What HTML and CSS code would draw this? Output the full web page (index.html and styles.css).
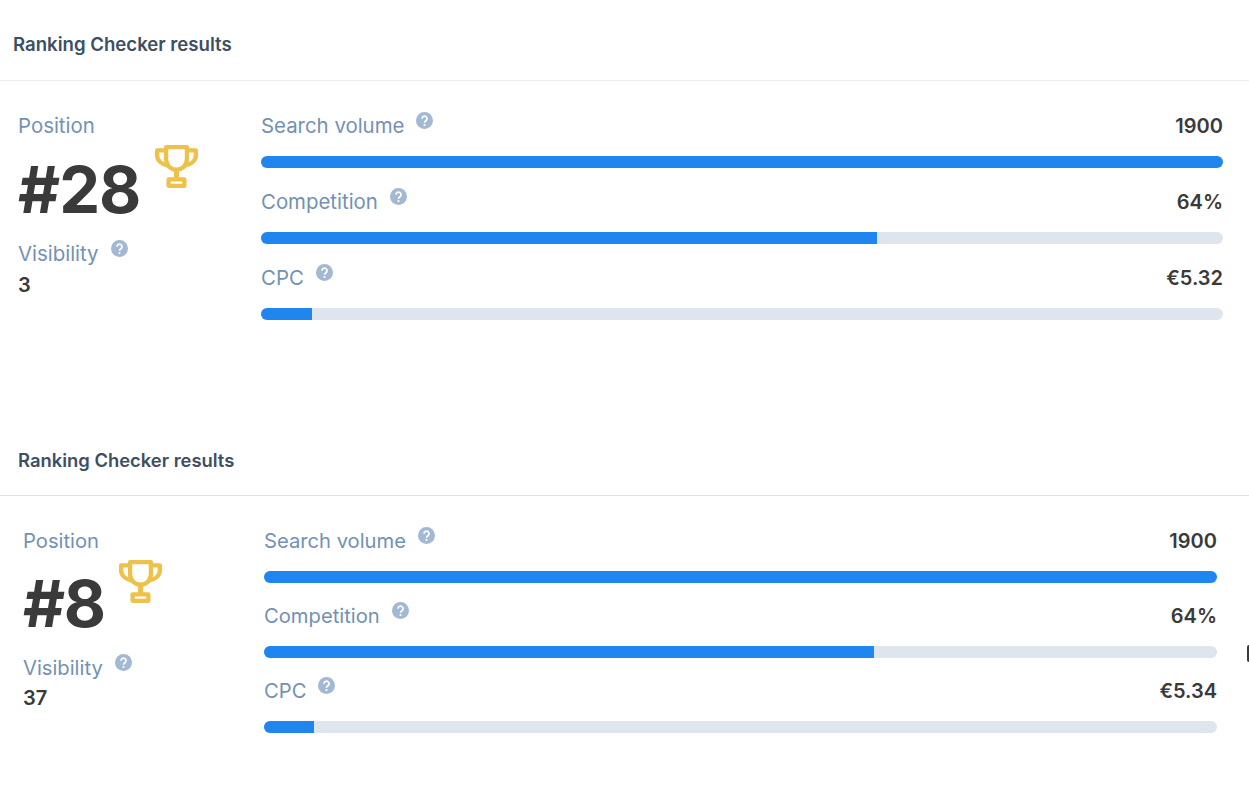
FILE: index.html
```html
<!DOCTYPE html>
<html lang="en">
<head>
  <meta charset="UTF-8">
  <title>Ranking Checker results</title>
  <link rel="stylesheet" href="styles.css">
</head>
<body>

  <!-- first result -->
  <section class="result result-first">
    <div class="result-head">
      <h2>Ranking Checker results</h2>
    </div>
    <div class="result-body">
      <div class="summary">
        <div class="label-row">
          <span class="label">Position</span>
        </div>
        <div class="position">
          <span class="position-num">#28</span>
          <svg class="trophy" viewBox="0 0 24 24"><use href="#trophy-icon"/></svg>
        </div>
        <div class="label-row">
          <span class="label">Visibility</span>
          <svg class="help" viewBox="0 0 16 16"><use href="#help-icon"/></svg>
        </div>
        <div class="visibility">3</div>
      </div>
      <div class="metrics">
        <div class="metric">
          <div class="metric-top">
            <div class="label-row">
              <span class="label">Search volume</span>
              <svg class="help" viewBox="0 0 16 16"><use href="#help-icon"/></svg>
            </div>
            <span class="value">1900</span>
          </div>
          <div class="bar"><div class="bar-fill" style="width:100%"></div></div>
        </div>
        <div class="metric">
          <div class="metric-top">
            <div class="label-row">
              <span class="label">Competition</span>
              <svg class="help" viewBox="0 0 16 16"><use href="#help-icon"/></svg>
            </div>
            <span class="value">64%</span>
          </div>
          <div class="bar"><div class="bar-fill" style="width:64%"></div></div>
        </div>
        <div class="metric">
          <div class="metric-top">
            <div class="label-row">
              <span class="label">CPC</span>
              <svg class="help" viewBox="0 0 16 16"><use href="#help-icon"/></svg>
            </div>
            <span class="value">€5.32</span>
          </div>
          <div class="bar"><div class="bar-fill" style="width:5.32%"></div></div>
        </div>
      </div>
    </div>
  </section>

  <!-- second result -->
  <section class="result result-second">
    <div class="result-head">
      <h2>Ranking Checker results</h2>
    </div>
    <div class="result-body">
      <div class="summary">
        <div class="label-row">
          <span class="label">Position</span>
        </div>
        <div class="position">
          <span class="position-num">#8</span>
          <svg class="trophy" viewBox="0 0 24 24"><use href="#trophy-icon"/></svg>
        </div>
        <div class="label-row">
          <span class="label">Visibility</span>
          <svg class="help" viewBox="0 0 16 16"><use href="#help-icon"/></svg>
        </div>
        <div class="visibility">37</div>
      </div>
      <div class="metrics">
        <div class="metric">
          <div class="metric-top">
            <div class="label-row">
              <span class="label">Search volume</span>
              <svg class="help" viewBox="0 0 16 16"><use href="#help-icon"/></svg>
            </div>
            <span class="value">1900</span>
          </div>
          <div class="bar"><div class="bar-fill" style="width:100%"></div></div>
        </div>
        <div class="metric">
          <div class="metric-top">
            <div class="label-row">
              <span class="label">Competition</span>
              <svg class="help" viewBox="0 0 16 16"><use href="#help-icon"/></svg>
            </div>
            <span class="value">64%</span>
          </div>
          <div class="bar"><div class="bar-fill" style="width:64%"></div></div>
        </div>
        <div class="metric">
          <div class="metric-top">
            <div class="label-row">
              <span class="label">CPC</span>
              <svg class="help" viewBox="0 0 16 16"><use href="#help-icon"/></svg>
            </div>
            <span class="value">€5.34</span>
          </div>
          <div class="bar"><div class="bar-fill" style="width:5.25%"></div></div>
        </div>
      </div>
    </div>
  </section>

  <!-- scrap of the mouse cursor at the window edge -->
  <div class="cursor-scrap"></div>

  <!-- shared icons -->
  <svg class="icon-defs" aria-hidden="true">
    <defs>
      <g id="trophy-icon" fill="none" stroke="#edc14a" stroke-width="2.4" stroke-linejoin="round">
        <path d="M6.2 1.2H17.8V8A5.8 5.8 0 0 1 6.2 8Z"/>
        <path d="M6.2 3H1.2V5.8C1.2 8.6 3.6 10.8 7.6 11.6"/>
        <path d="M17.8 3H22.8V5.8C22.8 8.6 20.4 10.8 16.4 11.6"/>
        <path d="M12 13.5V19" stroke-width="2.8"/>
        <rect x="7.6" y="19.2" width="8.8" height="3.6"/>
      </g>
      <g id="help-icon">
        <circle cx="8" cy="8" r="8" fill="#a3b8d1"/>
        <path d="M5.7 6.3A2.35 2.35 0 1 1 9.3 8.2C8.4 8.8 8 9.1 8 10" fill="none" stroke="#fff" stroke-width="1.6"/>
        <circle cx="8" cy="12.2" r="1" fill="#fff"/>
      </g>
    </defs>
  </svg>
</body>
</html>
```

FILE: styles.css
```css
body {
  margin: 0;
  padding: 0;
  font-family: "Inter", "Liberation Sans", sans-serif;
  background: #fff;
  overflow: hidden;
}
.result-head {
  display: flex;
  align-items: center;
  border-bottom: 1px solid #e8edf3;
  box-sizing: content-box;
}
.result-head h2 {
  margin: 0;
  font-size: 18.6px;
  font-weight: 600;
  color: #3c4f63;
}
.result-body {
  display: flex;
  padding-top: 30px;
}

/* the two results are not quite on the same grid */
.result-first {
  height: 416px;
}
.result-first .result-head {
  padding: 8px 0 0 13px;
  height: 72px;
}
.result-first .summary {
  width: 243px;
  padding-left: 18px;
}
.result-first .metrics {
  margin-right: 26px;
}
.result-first .metric {
  margin-bottom: 19px;
}
.result-first .visibility {
  margin-top: 1px;
}
.result-second .result-head {
  padding: 9px 0 0 18px;
  height: 70px;
  border-bottom-color: #e0e4e9;
}
.result-second .result-head h2 {
  font-size: 18.4px;
}
.result-second .summary {
  width: 241px;
  padding-left: 23px;
}
.result-second .metrics {
  margin-right: 32px;
}
.result-second .metric {
  margin-bottom: 18px;
}
.result-second .label {
  font-size: 20.2px;
}
.result-second .position {
  height: 97px;
  gap: 14px;
}
.result-second .position-num {
  line-height: 96px;
  letter-spacing: -1.5px;
}

.summary {
  flex-shrink: 0;
}
.metrics {
  flex: 1;
}
.label-row {
  display: flex;
  align-items: flex-start;
  gap: 12px;
  height: 30px;
}
.label {
  font-size: 20.4px;
  line-height: 30px;
  color: #7391b3;
}
.help {
  width: 17px;
  height: 17px;
  margin-top: 1px;
  flex-shrink: 0;
}
.position {
  display: flex;
  align-items: flex-start;
  gap: 15px;
  height: 98px;
}
.position-num {
  font-size: 65px;
  line-height: 98px;
  font-weight: 700;
  color: #3a3a3a;
  letter-spacing: -1px;
}
.trophy {
  width: 43px;
  height: 43px;
  margin-top: 4px;
}
.visibility {
  font-size: 20px;
  line-height: 30px;
  font-weight: 600;
  color: #3a3a3a;
}
.metric-top {
  display: flex;
  justify-content: space-between;
  margin-bottom: 15px;
}
.value {
  font-size: 20px;
  line-height: 30px;
  font-weight: 600;
  color: #3a3a3a;
}
.bar {
  height: 12px;
  background: #dee5ed;
  border-radius: 6px;
  overflow: hidden;
}
.bar-fill {
  height: 100%;
  background: #1e86ee;
}
.cursor-scrap {
  position: absolute;
  left: 1247px;
  top: 645px;
  width: 4px;
  height: 17px;
  background: #3a3a3a;
  border-radius: 3px;
}
.icon-defs {
  position: absolute;
  width: 0;
  height: 0;
}
```
